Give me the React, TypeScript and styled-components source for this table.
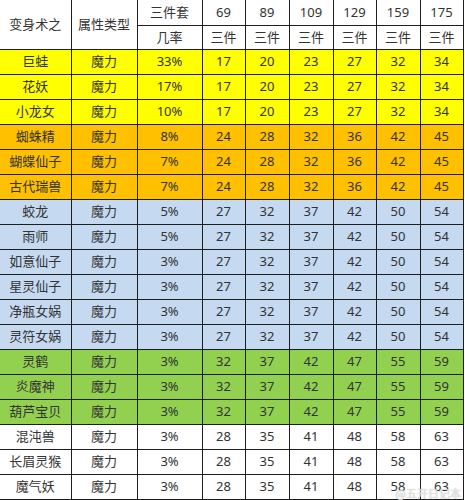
import React from "react";
import styled, { createGlobalStyle } from "styled-components";

const Global = createGlobalStyle`
  html, body { margin: 0; padding: 0; background: #fff; }
  body { font-family: "Noto Sans", "Noto Sans CJK SC", sans-serif; }
`;

const Wrap = styled.div`
  position: relative;
  width: 465px;
  height: 500px;
  overflow: hidden;
  background: #fff;
`;

const Table = styled.table`
  border-collapse: collapse;
  table-layout: fixed;
  width: 463px;
  font-family: "Noto Sans", "Noto Sans CJK SC", sans-serif;
  font-size: 13px;
  color: #333;
`;

const Cell = styled.td<{ $bg?: string; $noLeft?: boolean; $noTop?: boolean }>`
  border: 1px solid #1e1e1e;
  ${(p) => (p.$noLeft ? "border-left: none;" : "")}
  ${(p) => (p.$noTop ? "border-top: none;" : "")}
  background: ${(p) => p.$bg ?? "#fff"};
  text-align: center;
  vertical-align: middle;
  padding: 0;
  line-height: 1;
  white-space: nowrap;
  font-weight: 400;
`;

const HeadRow = styled.tr<{ $h: number }>`
  height: ${(p) => p.$h}px;
`;

const DataRow = styled.tr`
  height: 25px;
`;

const Watermark = styled.div`
  position: absolute;
  right: 4px;
  bottom: 1px;
  font-family: "Noto Sans CJK SC", sans-serif;
  font-size: 11px;
  line-height: 1;
  color: rgba(240, 240, 240, 0.85);
  text-shadow: 0 0 1px rgba(110, 110, 110, 0.6);
`;

const YELLOW = "#ffff00";
const ORANGE = "#ffc000";
const BLUE = "#c5d9f1";
const GREEN = "#92d050";
const WHITE = "#ffffff";

type Row = { name: string; rate: string; vals: number[]; bg: string };

const rows: Row[] = [
  { name: "巨蛙", rate: "33%", vals: [17, 20, 23, 27, 32, 34], bg: YELLOW },
  { name: "花妖", rate: "17%", vals: [17, 20, 23, 27, 32, 34], bg: YELLOW },
  { name: "小龙女", rate: "10%", vals: [17, 20, 23, 27, 32, 34], bg: YELLOW },
  { name: "蜘蛛精", rate: "8%", vals: [24, 28, 32, 36, 42, 45], bg: ORANGE },
  { name: "蝴蝶仙子", rate: "7%", vals: [24, 28, 32, 36, 42, 45], bg: ORANGE },
  { name: "古代瑞兽", rate: "7%", vals: [24, 28, 32, 36, 42, 45], bg: ORANGE },
  { name: "蛟龙", rate: "5%", vals: [27, 32, 37, 42, 50, 54], bg: BLUE },
  { name: "雨师", rate: "5%", vals: [27, 32, 37, 42, 50, 54], bg: BLUE },
  { name: "如意仙子", rate: "3%", vals: [27, 32, 37, 42, 50, 54], bg: BLUE },
  { name: "星灵仙子", rate: "3%", vals: [27, 32, 37, 42, 50, 54], bg: BLUE },
  { name: "净瓶女娲", rate: "3%", vals: [27, 32, 37, 42, 50, 54], bg: BLUE },
  { name: "灵符女娲", rate: "3%", vals: [27, 32, 37, 42, 50, 54], bg: BLUE },
  { name: "灵鹤", rate: "3%", vals: [32, 37, 42, 47, 55, 59], bg: GREEN },
  { name: "炎魔神", rate: "3%", vals: [32, 37, 42, 47, 55, 59], bg: GREEN },
  { name: "葫芦宝贝", rate: "3%", vals: [32, 37, 42, 47, 55, 59], bg: GREEN },
  { name: "混沌兽", rate: "3%", vals: [28, 35, 41, 48, 58, 63], bg: WHITE },
  { name: "长眉灵猴", rate: "3%", vals: [28, 35, 41, 48, 58, 63], bg: WHITE },
  { name: "魔气妖", rate: "3%", vals: [28, 35, 41, 48, 58, 63], bg: WHITE },
];

const levels = [69, 89, 109, 129, 159, 175];
const widths = [71, 66, 65, 43, 44, 44, 43, 44, 43];

export default function App() {
  return (
    <Wrap>
      <Global />
      <Table>
        <colgroup>
          {widths.map((w, i) => (
            <col key={i} style={{ width: w }} />
          ))}
        </colgroup>
        <thead>
          <HeadRow $h={25}>
            <Cell as="th" rowSpan={2} $noLeft $noTop>
              变身术之
            </Cell>
            <Cell as="th" rowSpan={2} $noTop>
              属性类型
            </Cell>
            <Cell as="th" $noTop>
              三件套
            </Cell>
            {levels.map((l) => (
              <Cell as="th" key={l} $noTop>
                {l}
              </Cell>
            ))}
          </HeadRow>
          <HeadRow $h={24}>
            <Cell as="th">几率</Cell>
            {levels.map((l) => (
              <Cell as="th" key={l}>
                三件
              </Cell>
            ))}
          </HeadRow>
        </thead>
        <tbody>
          {rows.map((r) => (
            <DataRow key={r.name}>
              <Cell $bg={r.bg} $noLeft>
                {r.name}
              </Cell>
              <Cell $bg={r.bg}>魔力</Cell>
              <Cell $bg={r.bg}>{r.rate}</Cell>
              {r.vals.map((v, i) => (
                <Cell key={i} $bg={r.bg}>
                  {v}
                </Cell>
              ))}
            </DataRow>
          ))}
        </tbody>
      </Table>
      <Watermark>@五开日记本</Watermark>
    </Wrap>
  );
}
